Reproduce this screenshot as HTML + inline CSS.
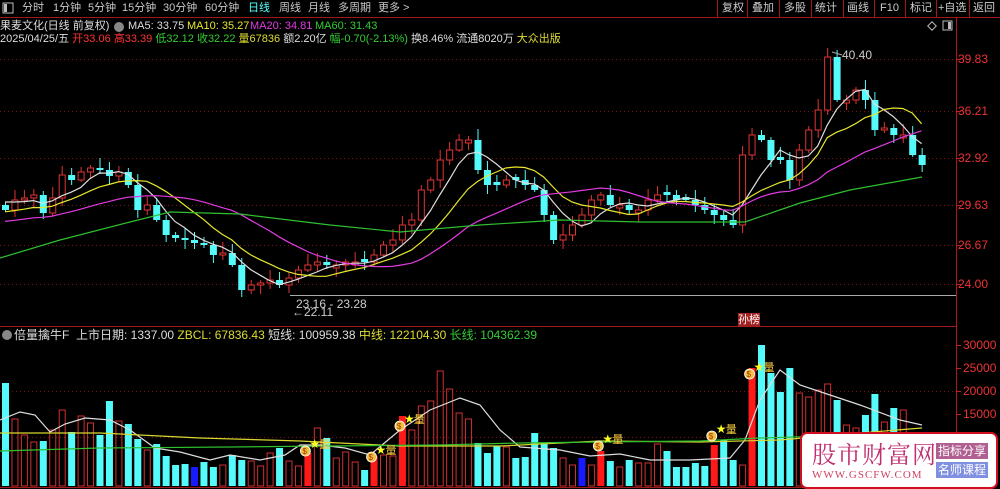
<!DOCTYPE html>
<html><head><meta charset="utf-8">
<style>
html,body{margin:0;padding:0;background:#000;width:1000px;height:489px;overflow:hidden}
body{font-family:"Liberation Sans","Noto Sans CJK SC",sans-serif;font-size:11px;color:#ccc;position:relative}
.t{position:absolute;white-space:nowrap;line-height:14px}
</style></head><body>
<svg id="s" width="1000" height="489" style="position:absolute;left:0;top:0" xmlns="http://www.w3.org/2000/svg"></svg>

<div class="t" style="left:22px;top:1px;color:#c8c8c8">分时</div>
<div class="t" style="left:53px;top:1px;color:#c8c8c8">1分钟</div>
<div class="t" style="left:88px;top:1px;color:#c8c8c8">5分钟</div>
<div class="t" style="left:122px;top:1px;color:#c8c8c8">15分钟</div>
<div class="t" style="left:163px;top:1px;color:#c8c8c8">30分钟</div>
<div class="t" style="left:205px;top:1px;color:#c8c8c8">60分钟</div>
<div class="t" style="left:248px;top:1px;color:#5ff">日线</div>
<div class="t" style="left:279px;top:1px;color:#c8c8c8">周线</div>
<div class="t" style="left:308px;top:1px;color:#c8c8c8">月线</div>
<div class="t" style="left:338px;top:1px;color:#c8c8c8">多周期</div>
<div class="t" style="left:378px;top:1px;color:#c8c8c8">更多 &gt;</div>
<div class="t" style="left:722px;top:1px">复权</div>
<div class="t" style="left:752px;top:1px">叠加</div>
<div class="t" style="left:784px;top:1px">多股</div>
<div class="t" style="left:815px;top:1px">统计</div>
<div class="t" style="left:847px;top:1px">画线</div>
<div class="t" style="left:880px;top:1px">F10</div>
<div class="t" style="left:910px;top:1px">标记</div>
<div class="t" style="left:938px;top:1px">+自选</div>
<div class="t" style="left:973px;top:1px">返回</div>

<div class="t" style="left:0;top:19px;color:#ddd">果麦文化(日线 前复权)</div>
<div class="t" style="left:128px;top:19px;color:#ddd">MA5: 33.75</div>
<div class="t" style="left:187px;top:19px;color:#e6e62e">MA10: 35.27</div>
<div class="t" style="left:250px;top:19px;color:#e23ae2">MA20: 34.81</div>
<div class="t" style="left:315px;top:19px;color:#3c3">MA60: 31.43</div>

<div class="t" style="left:0;top:32px;color:#ddd">2025/04/25/五 <span style="color:#f33">开33.06 高33.39</span> <span style="color:#3c3">低32.12 收32.22</span> <span style="color:#dd3">量67836</span> 额2.20亿 <span style="color:#3c3">幅-0.70(-2.13%)</span> 换8.46% 流通8020万 <span style="color:#dd3">大众出版</span></div>

<div class="t" style="left:958px;top:52px;color:#e33;font-size:12px">39.83</div>
<div class="t" style="left:958px;top:104px;color:#e33;font-size:12px">36.21</div>
<div class="t" style="left:958px;top:151px;color:#e33;font-size:12px">32.92</div>
<div class="t" style="left:958px;top:198px;color:#e33;font-size:12px">29.63</div>
<div class="t" style="left:958px;top:238px;color:#e33;font-size:12px">26.67</div>
<div class="t" style="left:958px;top:277px;color:#e33;font-size:12px">24.00</div>
<div class="t" style="left:842px;top:48px;color:#ccc;font-size:12px">40.40</div>
<div class="t" style="left:296px;top:297px;color:#ccc;font-size:12px">23.16 - 23.28</div>
<div class="t" style="left:292px;top:305px;color:#ccc;font-size:12px">←22.11</div>
<div class="t" style="left:738px;top:313px;font-size:11px;color:#fff;background:#a02020">孙榜</div>

<div class="t" style="left:14px;top:328px;color:#ddd;font-size:12px">倍量擒牛F&nbsp; 上市日期: 1337.00 <span style="color:#dd3">ZBCL: 67836.43</span> 短线: 100959.38 <span style="color:#dd3">中线: 122104.30</span> <span style="color:#3c3">长线: 104362.39</span></div>

<div class="t" style="left:963px;top:338px;color:#e33;font-size:12px">30000</div>
<div class="t" style="left:963px;top:361px;color:#e33;font-size:12px">25000</div>
<div class="t" style="left:963px;top:384px;color:#e33;font-size:12px">20000</div>
<div class="t" style="left:963px;top:407px;color:#e33;font-size:12px">15000</div>

<div style="position:absolute;left:800px;top:432px;width:194px;height:53px;background:#fff;border:2px solid #d01020;border-radius:7px"></div>
<div class="t" style="left:812px;top:440px;font-size:24px;line-height:26px;color:#c03070;font-family:'Noto Serif CJK SC',serif;letter-spacing:1px">股市财富网</div>
<div class="t" style="left:812px;top:468px;font-size:11px;color:#d04060;font-family:'Liberation Serif',serif;letter-spacing:1px">WWW.GSCFW.COM</div>
<div class="t" style="left:936px;top:443px;width:52px;height:16px;font-size:12px;line-height:16px;background:#b06090;color:#fff;text-align:center">指标分享</div>
<div class="t" style="left:936px;top:462px;width:52px;height:16px;font-size:12px;line-height:16px;background:#8090e0;color:#fff;text-align:center">名师课程</div>

<script>
(function(){
var s=document.getElementById('s'),h='';
function L(x1,y1,x2,y2,c,w,d){h+='<line x1="'+x1+'" y1="'+y1+'" x2="'+x2+'" y2="'+y2+'" stroke="'+c+'" stroke-width="'+(w||1)+'"'+(d?' stroke-dasharray="'+d+'"':'')+'/>';}
function R(x,y,w,hh,f){h+='<rect x="'+x+'" y="'+y+'" width="'+w+'" height="'+hh+'" fill="'+f+'"/>';}
function P(pts,c){h+='<polyline fill="none" stroke="'+c+'" stroke-width="1.2" points="'+pts.map(function(p){return p[0].toFixed(1)+','+p[1].toFixed(1)}).join(' ')+'"/>';}
L(0,17.5,1000,17.5,'#a01818');
[717,747,779,811,843,874,905,936,969].forEach(function(x){L(x+.5,0,x+.5,17,'#a01818');});
L(956.5,17,956.5,489,'#b01818');
L(0,326.5,956,326.5,'#a01818');
L(0,487.5,956,487.5,'#a01818');
h+='<rect x="929" y="23" width="6" height="6" fill="none" stroke="#bbb" transform="rotate(45 932 26)"/>';
h+='<rect x="943" y="21" width="9" height="9" fill="none" stroke="#bbb"/><rect x="948" y="22" width="3" height="7" fill="#bbb"/>';
h+='<rect x="3" y="3" width="10" height="10" fill="none" stroke="#bbb"/><rect x="4" y="4" width="3" height="8" fill="#bbb"/>';
h+='<circle cx="119" cy="27" r="5" fill="#888"/><circle cx="7" cy="335" r="5" fill="#888"/>';
[59,111,158,205,245,284].forEach(function(y){L(0,y+.5,956,y+.5,'#7a1515',1,'1,3');L(956,y+.5,961,y+.5,'#c02020');});
[345,368,391,414,437].forEach(function(y){L(956,y+.5,961,y+.5,'#c02020');});
[391,437].forEach(function(y){L(0,y+.5,956,y+.5,'#7a1515',1,'1,3');});
L(290,295.5,956,295.5,'#aaa');
var C=[210,200,198,195,213,198,175,180,172,168,170,176,172,185,210,205,220,235,238,240,243,245,255,253,265,290,285,283,280,285,278,270,265,262,265,265,262,262,262,255,245,240,225,220,190,180,160,150,140,140,170,185,185,180,180,185,190,215,240,235,225,215,200,195,205,205,210,210,200,195,195,200,200,205,210,215,220,225,155,135,140,160,160,180,150,130,110,57,100,100,90,100,130,128,135,135,155,165];
var N=C.length,X=function(i){return 5+9.45*i;};
var O=[];
for(var i=0;i<N;i++){
 var o=i?C[i-1]:205;
 if(Math.abs(o-C[i])<2){o=C[i]+((i%2)?3:-3);}
 O.push(o);
 var x=X(i),tp=Math.min(o,C[i]),bt=Math.max(o,C[i]);
 var up=C[i]<o, col=up?'#e03434':'#55fbfb';
 var hi=tp-3-(i*7%9),lo=bt+2+(i*5%8);
 if(i==87)hi=48;
 L(x+.5,hi,x+.5,lo,col);
 if(up){h+='<rect x="'+(x-2.5)+'" y="'+tp+'" width="6" height="'+Math.max(bt-tp,2)+'" fill="#000" stroke="'+col+'"/>';}
 else R(x-3,tp,7,Math.max(bt-tp,2),col);
}
function MA(n,pad){var r=[];for(var i=0;i<N;i++){var t=0;for(var k=0;k<n;k++){var j=i-k;t+=j>=0?C[j]:pad;}r.push([X(i),t/n]);}return r;}
P(MA(5,200),'#ddd');P(MA(10,212),'#e6e62e');P(MA(20,222),'#e23ae2');
P([[0,258],[60,240],[130,222],[170,212],[240,214],[330,225],[400,232],[480,225],[560,220],[640,222],[700,222],[745,222],[800,203],[850,190],[922,177]],'#2fbf2f');
L(832,52,842,55,'#aaa');
var V=[383,419,435,442,441,430,410,432,416,423,435,401,421,424,439,450,444,456,465,464,467,462,467,465,455,460,461,466,453,448,461,466,453,428,438,458,452,462,470,456,455,456,416,430,406,401,371,389,413,419,443,453,446,447,458,457,433,443,448,458,465,458,465,451,461,467,460,463,463,444,451,467,467,463,466,445,440,460,465,368,345,373,392,368,393,397,390,384,400,425,428,415,394,422,408,410,435,440];
var sig={32:1,39:1,42:1,63:1,75:1,79:1},blue={20:1,61:1};
for(var i=0;i<N&&i<V.length;i++){
 var x=X(i),t=V[i],up=C[i]<O[i];
 if(sig[i])R(x-3,t,7,486-t,'#ff1a1a');
 else if(blue[i])R(x-3,t,7,486-t,'#1a1aff');
 else if(up)h+='<rect x="'+(x-2.5)+'" y="'+t+'" width="6" height="'+(486-t)+'" fill="none" stroke="#d03030"/>';
 else R(x-3,t,7,486-t,'#55fbfb');
}
P([[0,420],[20,412],[35,415],[50,432],[65,424],[85,418],[110,420],[130,430],[155,448],[180,452],[210,460],[230,455],[260,460],[285,455],[300,445],[320,445],[345,448],[370,455],[400,430],[430,410],[460,398],[480,405],[500,430],[520,447],[560,450],[590,456],[620,454],[650,460],[690,460],[730,458],[745,440],[760,400],[780,370],[800,385],[830,395],[860,405],[900,420],[922,425]],'#ddd');
P([[0,433],[100,433],[200,438],[300,441],[400,446],[500,446],[600,441],[700,442],[780,440],[860,433],[922,428]],'#d8d830');
P([[0,451],[100,448],[230,447],[330,446],[440,445],[520,443],[600,442],[700,441],[760,438],[860,435],[922,434]],'#2fbf2f');
[[X(32),449],[X(39),455],[X(42),424],[X(63),444],[X(75),434],[X(79),372]].forEach(function(m){
 var x=m[0],y=m[1];
 h+='<circle cx="'+(x-2)+'" cy="'+(y+2)+'" r="5" fill="#f0c040" stroke="#fff" stroke-width=".8"/><text x="'+(x-5)+'" y="'+(y+5)+'" font-size="8" fill="#a03000" font-family="Liberation Sans">$</text>';
 h+='<text x="'+(x+2)+'" y="'+(y-1)+'" font-size="12" fill="#ffff20" font-family="DejaVu Sans">★</text>';
 h+='<text x="'+(x+12)+'" y="'+(y-1)+'" font-size="11" fill="#ffd040" font-family="Noto Sans CJK SC">量</text>';
});
s.innerHTML=h;
})();
</script>
</body></html>
